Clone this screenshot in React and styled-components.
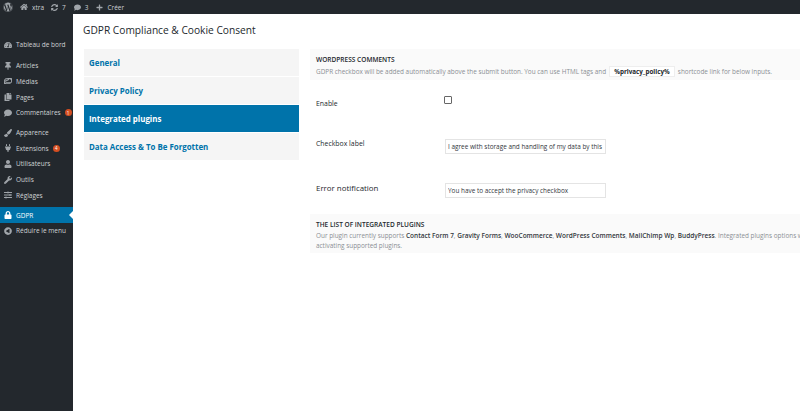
import React from 'react';
import styled, { createGlobalStyle } from 'styled-components';
import { FaWordpress, FaHome, FaComment, FaPlus, FaSyncAlt, FaTachometerAlt, FaThumbtack, FaImages, FaCopy, FaPaintBrush, FaPlug, FaUser, FaWrench, FaSlidersH, FaLock, FaPlayCircle } from 'react-icons/fa';

const Global = createGlobalStyle`
  html, body { margin: 0; padding: 0; background: #fff; }
  body { width: 800px; height: 411px; overflow: hidden; font-family: "Open Sans", "Noto Sans", sans-serif; }
  * { box-sizing: border-box; }
`;
const Page = styled.div`width: 800px; height: 411px; display: flex; flex-direction: column; overflow: hidden;`;
const TopBar = styled.header`height: 14px; flex: none; background: #23282d; color: #ccd0d4; display: flex; align-items: center; padding-left: 3px; font-size: 6.5px;`;
const BarItem = styled.span`display: inline-flex; align-items: center; gap: ${p => p.$gap || 4}px; margin-right: ${p => p.$mr || 7}px; svg { color: #a0a5aa; }`;
const Body = styled.div`flex: 1; display: flex; min-height: 0;`;
const Sidebar = styled.nav`width: 73px; flex: none; background: #23282d; padding-top: 23px; display: flex; flex-direction: column;`;
const MenuItem = styled.div`height: 15.6px; display: flex; align-items: center; padding-left: 4px; gap: 4px; font-size: 6.5px; position: relative;
  color: ${p => p.$active ? '#fff' : '#d0d3d5'}; background: ${p => p.$active ? '#0073aa' : 'transparent'};
  margin-top: ${p => p.$mt || 0}px;
  svg { flex: none; width: 8px; height: 8px; color: ${p => p.$active ? '#fff' : '#a0a5aa'}; }
`;
const Pointer = styled.i`position: absolute; right: 0; top: 4px; border: 4px solid transparent; border-right-color: #fff; border-left-width: 0;`;
const Badge = styled.b`width: 7px; height: 7px; border-radius: 50%; background: #d54e21; color: #fff; font-size: 4.5px; font-weight: 400; display: inline-flex; align-items: center; justify-content: center; margin-left: 0;`;
const Main = styled.main`flex: 1; min-width: 0; padding: 0 0 0 11px; overflow: hidden;`;
const Title = styled.h1`margin: 9px 0 0 -1px; font-size: 10.2px; line-height: 15px; font-weight: 400; color: #23282d; height: 26px;`;
const Columns = styled.div`display: flex; gap: 11px; align-items: flex-start;`;
const Tabs = styled.div`width: 215px; flex: none; display: flex; flex-direction: column; gap: 1px;`;
const Tab = styled.div`height: 27px; display: flex; align-items: center; padding-left: 5px; font-size: 7.9px; font-weight: 700;
  background: ${p => p.$active ? '#0073aa' : '#f5f5f5'}; color: ${p => p.$active ? '#fff' : '#0073aa'};
`;
const Panel = styled.div`flex: none; width: 490px;`;
const Notice = styled.div`background: #fafafa; padding: 6px 0 0 6px; height: ${p => p.$h}px; font-size: 6.4px; line-height: 10.5px; color: #8a8f94; white-space: nowrap;`;
const NoticeTitle = styled.div`color: #23282d; font-size: 6.55px; line-height: 10.5px; font-weight: 600; text-transform: uppercase;`;
const Code = styled.code`display: inline-block; background: #fff; border: 1px solid #eee; color: #23282d; font: 700 6.3px/9px "Open Sans", sans-serif; padding: 0 4.5px; margin: 0 1px;`;
const Strong = styled.span`color: #32373c; font-weight: 600; font-size: 6.5px;`;
const Row = styled.div`height: ${p => p.$h}px; display: flex; align-items: flex-start; padding: ${p => p.$pt}px 0 0 6px;`;
const Label = styled.label`width: ${p => p.$w || 129}px; flex: none; font-size: ${p => p.$size || 6.9}px; line-height: 10px; color: #23282d; font-weight: 500; padding-top: ${p => p.$pt || 0}px;`;
const Check = styled.span`width: 8px; height: 8px; border: 1px solid #666; border-radius: 1px; background: #fff; display: block;`;
const Input = styled.input`width: 161px; height: ${p => p.$h || 15}px; border: 1px solid #e4e4e4; background: #fff; font: 6.4px "Open Sans", sans-serif; color: #32373c; padding: 0 2px; outline: none;`;

const menu = [
  [FaTachometerAlt, 'Tableau de bord', 0],
  [FaThumbtack, 'Articles', 5.5],
  [FaImages, 'Médias'],
  [FaCopy, 'Pages'],
  [FaComment, 'Commentaires', 0, '1'],
  [FaPaintBrush, 'Apparence', 4.5],
  [FaPlug, 'Extensions', 0, '4'],
  [FaUser, 'Utilisateurs'],
  [FaWrench, 'Outils'],
  [FaSlidersH, 'Réglages'],
];

export default function App() {
  return (
    <Page>
      <Global />
      <TopBar>
        <BarItem $mr={7}><FaWordpress size={10} /></BarItem>
        <BarItem $mr={7}><FaHome size={8} />xtra</BarItem>
        <BarItem $mr={8}><FaSyncAlt size={7} />7</BarItem>
        <BarItem $mr={8}><FaComment size={7} />3</BarItem>
        <BarItem><FaPlus size={7} />Créer</BarItem>
      </TopBar>
      <Body>
        <Sidebar>
          {menu.map(([Icon, text, mt, badge]) => (
            <MenuItem key={text} $mt={mt}>
              <Icon />{text}{badge && <Badge>{badge}</Badge>}
            </MenuItem>
          ))}
          <MenuItem $active $mt={4.5}><FaLock />GDPR<Pointer /></MenuItem>
          <MenuItem><FaPlayCircle style={{ transform: 'scaleX(-1)' }} />Réduire le menu</MenuItem>
        </Sidebar>
        <Main>
          <Title>GDPR Compliance &amp; Cookie Consent</Title>
          <Columns>
            <Tabs>
              <Tab>General</Tab>
              <Tab>Privacy Policy</Tab>
              <Tab $active>Integrated plugins</Tab>
              <Tab>Data Access &amp; To Be Forgotten</Tab>
            </Tabs>
            <Panel>
              <Notice $h={31}>
                <NoticeTitle>WordPress Comments</NoticeTitle>
                GDPR checkbox will be added automatically above the submit button. You can use HTML tags and <Code>%privacy_policy%</Code> shortcode link for below inputs.
              </Notice>
              <Row $h={45} $pt={16}>
                <Label $pt={3} $w={128}>Enable</Label>
                <Check />
              </Row>
              <Row $h={43} $pt={14}>
                <Label>Checkbox label</Label>
                <Input readOnly value="I agree with storage and handling of my data by this website." />
              </Row>
              <Row $h={46} $pt={15}>
                <Label $size={7.9}>Error notification</Label>
                <Input readOnly value="You have to accept the privacy checkbox" />
              </Row>
              <Notice $h={39}>
                <NoticeTitle>The list of integrated plugins</NoticeTitle>
                Our plugin currently supports <Strong>Contact Form 7</Strong>, <Strong>Gravity Forms</Strong>, <Strong>WooCommerce</Strong>, <Strong>WordPress Comments</Strong>, <Strong>MailChimp Wp</Strong>, <Strong>BuddyPress</Strong>. Integrated plugins options will be available after<br />activating supported plugins.
              </Notice>
            </Panel>
          </Columns>
        </Main>
      </Body>
    </Page>
  );
}
